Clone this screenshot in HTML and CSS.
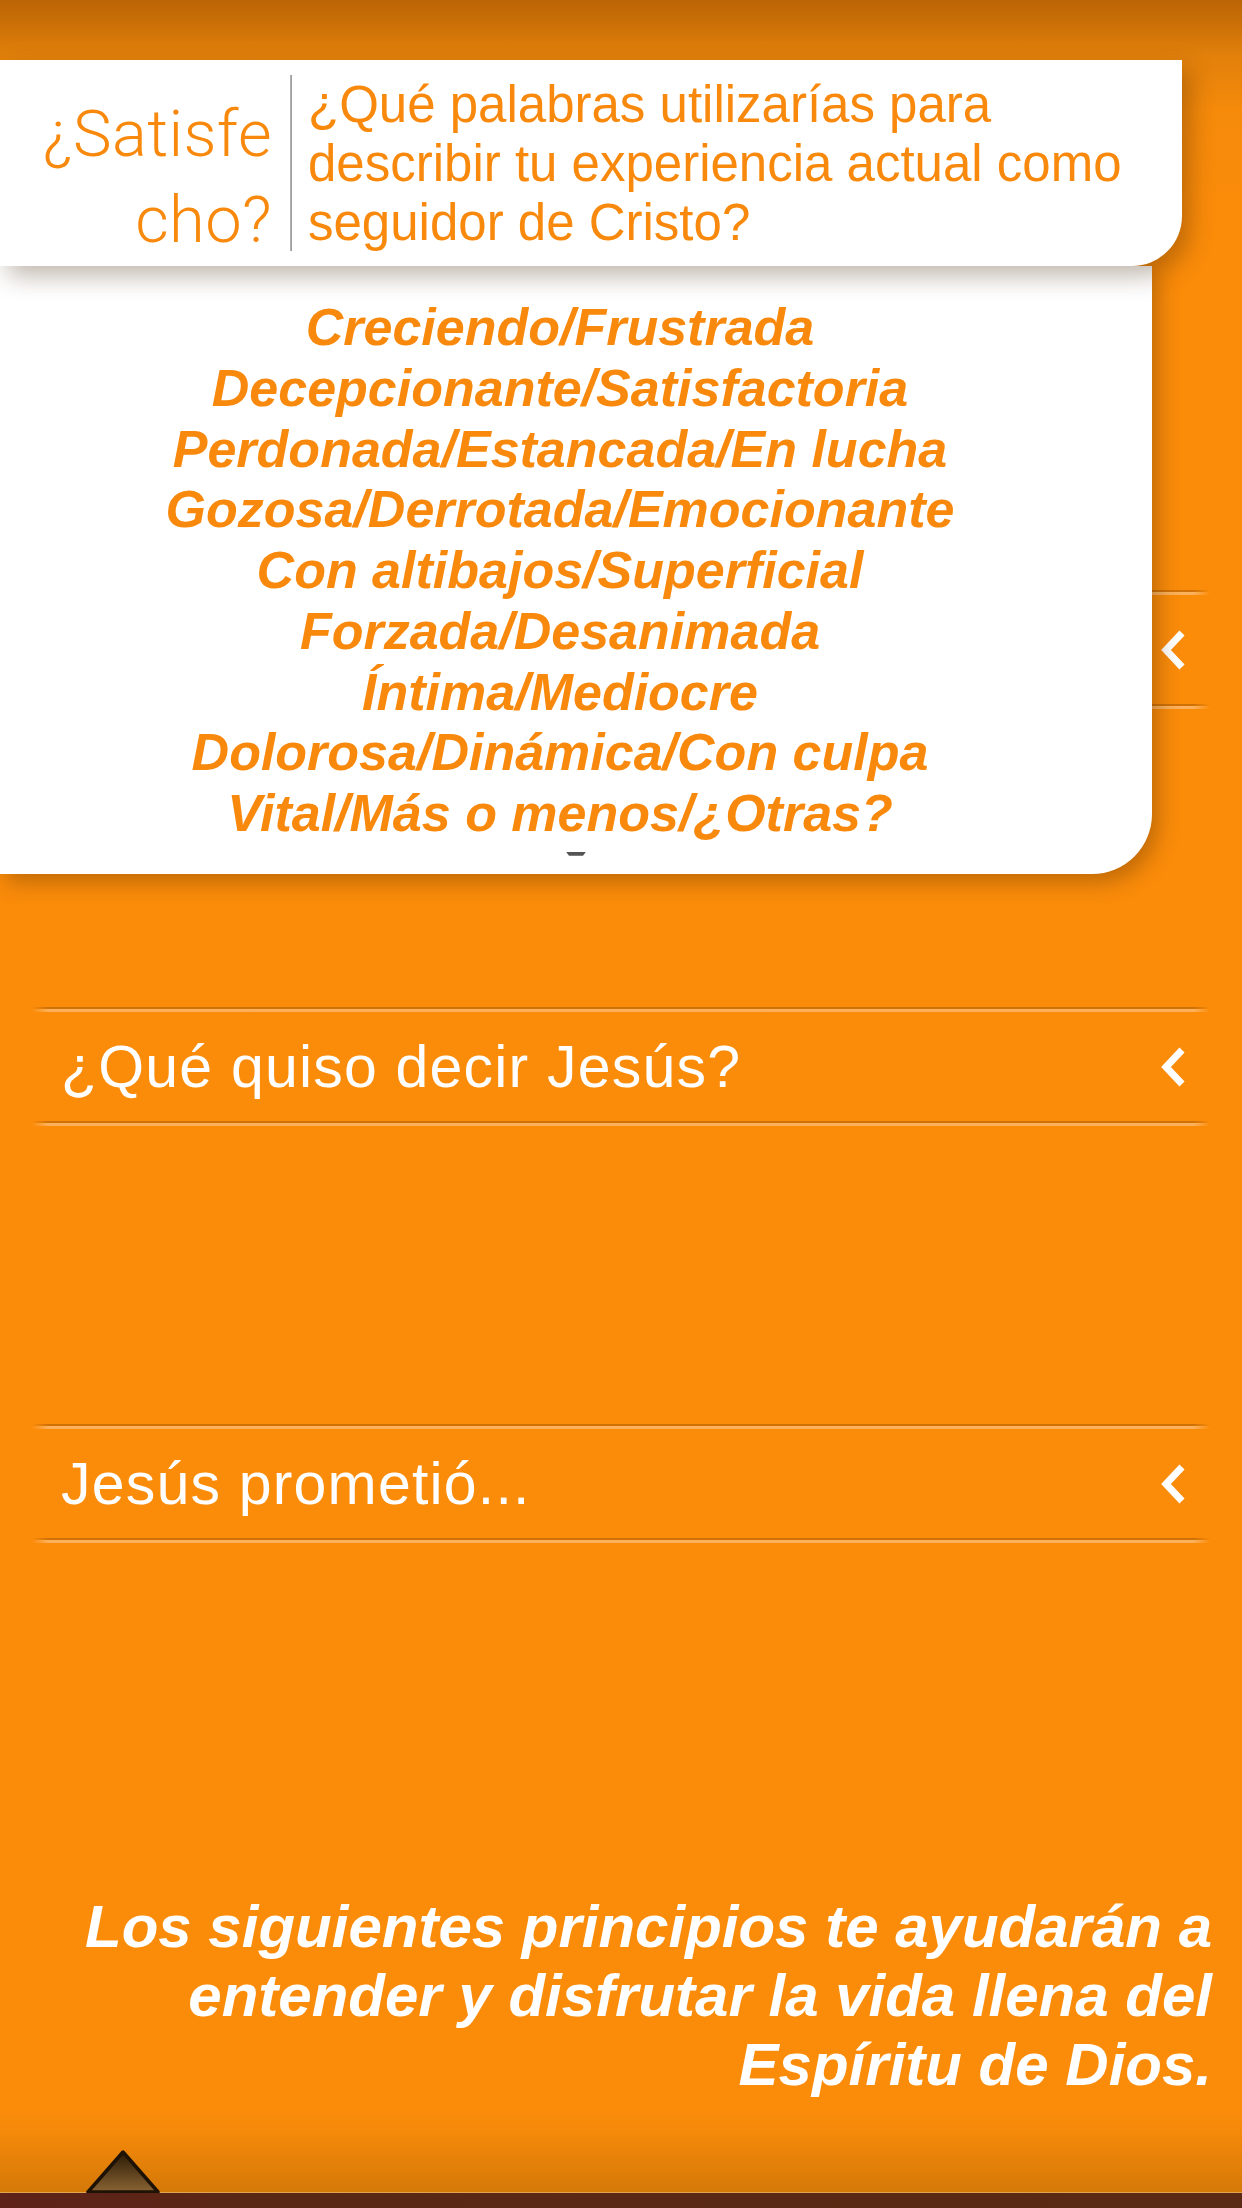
FILE: index.html
```html
<!DOCTYPE html>
<html lang="es">
<head>
<meta charset="utf-8">
<title>Satisfecho</title>
<link rel="stylesheet" href="styles.css">
</head>
<body>
<div class="screen">
  <div class="list">
    <div class="row">
      <div class="rule"></div>
      <div class="row-body"><span class="row-title"></span><svg class="chev" viewBox="0 0 26 40"><polyline points="22,3 6,20 22,37"/></svg></div>
      <div class="rule"></div>
    </div>
    <div class="row">
      <div class="rule"></div>
      <div class="row-body"><span class="row-title">¿Qué quiso decir Jesús?</span><svg class="chev" viewBox="0 0 26 40"><polyline points="22,3 6,20 22,37"/></svg></div>
      <div class="rule"></div>
    </div>
    <div class="row">
      <div class="rule"></div>
      <div class="row-body"><span class="row-title">Jesús prometió...</span><svg class="chev" viewBox="0 0 26 40"><polyline points="22,3 6,20 22,37"/></svg></div>
      <div class="rule"></div>
    </div>
  </div>

  <p class="closing">Los siguientes principios te ayudarán a<br>entender y disfrutar la vida llena del<br>Espíritu de Dios.</p>

  <div class="footer">
    <div class="footer-fade">
      <svg class="tri" viewBox="0 0 76 44">
        <defs>
          <linearGradient id="tg" x1="0" y1="0" x2="0" y2="1">
            <stop offset="0" stop-color="#2a1a05"/>
            <stop offset="1" stop-color="#8a6434"/>
          </linearGradient>
        </defs>
        <polygon points="38,3 3,43 73,43" fill="url(#tg)" stroke="#1e1204" stroke-width="3.5" stroke-linejoin="round"/>
      </svg>
    </div>
    <div class="footer-bar"></div>
  </div>

  <div class="popup">
    <div class="card-head">
      <div class="head-title">¿Satisfe<br>cho?</div>
      <div class="head-divider"></div>
      <div class="head-question">¿Qué palabras utilizarías para<br>describir tu experiencia actual como<br>seguidor de Cristo?</div>
    </div>
    <div class="card-body">
      <div class="words">
        Creciendo/Frustrada<br>
        Decepcionante/Satisfactoria<br>
        Perdonada/Estancada/En lucha<br>
        Gozosa/Derrotada/Emocionante<br>
        Con altibajos/Superficial<br>
        Forzada/Desanimada<br>
        Íntima/Mediocre<br>
        Dolorosa/Dinámica/Con culpa<br>
        Vital/Más o menos/¿Otras?
      </div>
      <div class="dash"></div>
    </div>
  </div>
</div>
</body>
</html>
```

FILE: styles.css
```css
* { box-sizing: border-box; }

html, body {
  margin: 0;
  padding: 0;
  background: #fb8c0a;
}

.screen {
  position: relative;
  width: 1242px;
  height: 2208px;
  overflow: hidden;
  display: flex;
  flex-direction: column;
  background: linear-gradient(to bottom, #bb6405 0, #e3810b 58px, #f58a0b 110px, #fb8c0a 200px, #fb8c0a 100%);
  font-family: "Liberation Sans", Arial, sans-serif;
}

/* ---------- list rows ---------- */
.list {
  margin-top: 590px;
  padding: 0 32px;
}

.row {
  margin-bottom: 298px;
}
.row:last-child {
  margin-bottom: 0;
}

.rule {
  height: 5px;
  background: linear-gradient(to bottom, #cc6f08 0, #d27308 2px, #fdb35e 2px, #fcaf57 5px);
  -webkit-mask-image: linear-gradient(to right, transparent 0, #000 16px, #000 calc(100% - 16px), transparent 100%);
  mask-image: linear-gradient(to right, transparent 0, #000 16px, #000 calc(100% - 16px), transparent 100%);
}

.row-body {
  height: 109px;
  display: flex;
  align-items: center;
  justify-content: space-between;
  padding-left: 29px;
  padding-right: 24px;
}

.row-title {
  color: #ffffff;
  font-size: 59px;
  letter-spacing: 1.2px;
  white-space: nowrap;
}

.chev {
  width: 26px;
  height: 40px;
  flex: none;
}
.chev polyline {
  fill: none;
  stroke: #ffffff;
  stroke-width: 7;
  stroke-linejoin: miter;
}

/* ---------- closing text ---------- */
.closing {
  margin: 349px 0 0;
  padding-right: 30px;
  text-align: right;
  color: #ffffff;
  font-size: 60px;
  line-height: 69px;
  font-weight: 700;
  font-style: italic;
  white-space: nowrap;
}

/* ---------- footer ---------- */
.footer {
  margin-top: auto;
}
.footer-fade {
  height: 82px;
  display: flex;
  align-items: flex-end;
  padding-left: 85px;
  background: linear-gradient(to bottom, rgba(110, 70, 0, 0) 0, rgba(110, 70, 0, 0.04) 20px, rgba(110, 70, 0, 0.27) 100%);
}
.tri {
  width: 76px;
  height: 44px;
  display: block;
  margin-bottom: -1px;
}
.footer-bar {
  height: 16px;
  background: linear-gradient(to right, #5e2218 0, #5a2715 20%, #5a2a14 100%);
  box-shadow: inset 0 1px 0 #e3a450;
}

/* ---------- popup cards ---------- */
.popup {
  position: absolute;
  top: 60px;
  left: 0;
}

.card-head {
  position: relative;
  z-index: 2;
  width: 1182px;
  height: 206px;
  background: #ffffff;
  border-radius: 0 0 50px 0;
  box-shadow: 8px 10px 24px rgba(60, 30, 0, 0.32);
  display: flex;
  align-items: flex-start;
  padding-top: 15px;
  color: #f8890c;
}

.head-title {
  width: 272px;
  margin-top: 16px;
  text-align: right;
  font-family: Roboto, "Liberation Sans", sans-serif;
  font-weight: 300;
  font-size: 65px;
  line-height: 86px;
  letter-spacing: 0.4px;
  white-space: nowrap;
}

.head-divider {
  width: 2px;
  height: 176px;
  margin-left: 18px;
  background: linear-gradient(to right, #b5b5b5, #9a9a9a);
}

.head-question {
  margin-left: 16px;
  font-size: 51px;
  line-height: 59px;
  white-space: nowrap;
}

.card-body {
  position: relative;
  z-index: 1;
  width: 1152px;
  height: 608px;
  background: #ffffff;
  border-radius: 0 0 60px 0;
  box-shadow: 6px 8px 22px rgba(60, 30, 0, 0.32);
  padding-top: 31px;
}

.words {
  padding-right: 32px;
  text-align: center;
  color: #f8890c;
  font-size: 52px;
  line-height: 60.75px;
  font-weight: 700;
  font-style: italic;
  white-space: nowrap;
}

.dash {
  width: 20px;
  height: 4px;
  margin: 8px auto 0;
  background: #555555;
  clip-path: polygon(0 0, 100% 0, 85% 100%, 15% 100%);
}
```
